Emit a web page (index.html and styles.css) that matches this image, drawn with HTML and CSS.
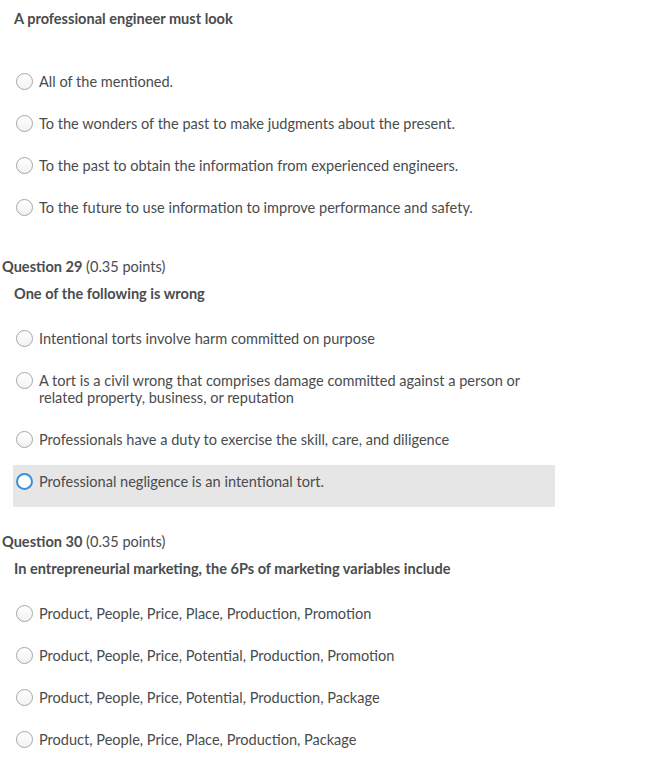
FILE: index.html
```html
<!DOCTYPE html>
<html>
<head>
<meta charset="utf-8">
<link rel="stylesheet" href="styles.css">
</head>
<body>
<div class="page">
  <section class="question first">
    <p class="q-text">A professional engineer must look</p>
    <ul class="options">
      <li class="option"><span class="radio"></span><span class="label">All of the mentioned.</span></li>
      <li class="option"><span class="radio"></span><span class="label">To the wonders of the past to make judgments about the present.</span></li>
      <li class="option"><span class="radio"></span><span class="label">To the past to obtain the information from experienced engineers.</span></li>
      <li class="option"><span class="radio"></span><span class="label">To the future to use information to improve performance and safety.</span></li>
    </ul>
  </section>

  <section class="question">
    <h2 class="q-head"><strong>Question 29</strong> (0.35 points)</h2>
    <p class="q-text">One of the following is wrong</p>
    <ul class="options">
      <li class="option"><span class="radio"></span><span class="label">Intentional torts involve harm committed on purpose</span></li>
      <li class="option"><span class="radio"></span><span class="label">A tort is a civil wrong that comprises damage committed against a person or related property, business, or reputation</span></li>
      <li class="option"><span class="radio"></span><span class="label">Professionals have a duty to exercise the skill, care, and diligence</span></li>
      <li class="option hover"><span class="radio focus"></span><span class="label">Professional negligence is an intentional tort.</span></li>
    </ul>
  </section>

  <section class="question">
    <h2 class="q-head"><strong>Question 30</strong> (0.35 points)</h2>
    <p class="q-text">In entrepreneurial marketing, the 6Ps of marketing variables include</p>
    <ul class="options">
      <li class="option"><span class="radio"></span><span class="label">Product, People, Price, Place, Production, Promotion</span></li>
      <li class="option"><span class="radio"></span><span class="label">Product, People, Price, Potential, Production, Promotion</span></li>
      <li class="option"><span class="radio"></span><span class="label">Product, People, Price, Potential, Production, Package</span></li>
      <li class="option"><span class="radio"></span><span class="label">Product, People, Price, Place, Production, Package</span></li>
    </ul>
  </section>
</div>
</body>
</html>
```

FILE: styles.css
```css
html, body {
  margin: 0;
  padding: 0;
  background: #ffffff;
}

body {
  font-family: Lato, "Noto Sans", sans-serif;
  font-size: 14.55px;
  line-height: 17px;
  color: #494c4e;
}

.page {
  padding: 10px 0 0 2px;
  width: 560px;
}

.question {
  margin-bottom: 26px;
}

.question.first {
  margin-bottom: 25px;
}

.q-head {
  margin: 0;
  font-size: 14.55px;
  font-weight: 400;
  line-height: 17px;
}

.q-head strong {
  font-weight: 700;
}

.q-text {
  margin: 10px 0 20px 12px;
  font-weight: 700;
}

.first .q-text {
  margin-top: 0;
  margin-bottom: 38px;
}

.options {
  list-style: none;
  margin: 0 0 0 11px;
  padding: 0;
  width: 542px;
}

.option {
  display: flex;
  align-items: flex-start;
  gap: 6px;
  padding: 8px 10px 17px 3px;
}

.option.hover {
  background: #e6e6e6;
}

.radio {
  flex: none;
  width: 17px;
  height: 17px;
  box-sizing: border-box;
  border-radius: 50%;
  border: 1px solid #a3a6a8;
  background: linear-gradient(#ffffff, #f1f2f3);
}

.radio.focus {
  border: 2px solid #3a8fd6;
  background: #ffffff;
}

.label {
  display: block;
}
```
